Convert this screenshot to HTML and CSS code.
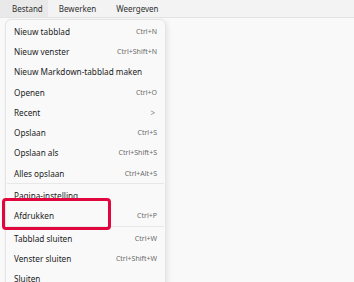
FILE: index.html
```html
<!DOCTYPE html>
<html>
<head>
<meta charset="utf-8">
<link rel="stylesheet" href="styles.css">
</head>
<body>
<div class="menubar">
  <div class="tab active">Bestand</div>
  <div class="tab">Bewerken</div>
  <div class="tab">Weergeven</div>
</div>
<div class="content">
  <div class="menu">
    <div class="item"><span>Nieuw tabblad</span><span class="sc">Ctrl+N</span></div>
    <div class="item"><span>Nieuw venster</span><span class="sc">Ctrl+Shift+N</span></div>
    <div class="item"><span>Nieuw Markdown-tabblad maken</span></div>
    <div class="item"><span>Openen</span><span class="sc">Ctrl+O</span></div>
    <div class="item"><span>Recent</span><span class="sc chev">&gt;</span></div>
    <div class="item"><span>Opslaan</span><span class="sc">Ctrl+S</span></div>
    <div class="item"><span>Opslaan als</span><span class="sc">Ctrl+Shift+S</span></div>
    <div class="item"><span>Alles opslaan</span><span class="sc">Ctrl+Alt+S</span></div>
    <div class="sep"></div>
    <div class="item"><span>Pagina-instelling</span></div>
    <div class="item"><span>Afdrukken</span><span class="sc">Ctrl+P</span></div>
    <div class="sep"></div>
    <div class="item"><span>Tabblad sluiten</span><span class="sc">Ctrl+W</span></div>
    <div class="item"><span>Venster sluiten</span><span class="sc">Ctrl+Shift+W</span></div>
    <div class="item"><span>Sluiten</span></div>
  </div>
  <div class="highlight"></div>
</div>
</body>
</html>
```
FILE: styles.css
```css
html, body {
  margin: 0;
  padding: 0;
  width: 354px;
  height: 282px;
  overflow: hidden;
  background: #f9f9f9;
  font-family: "Noto Sans", "Open Sans", sans-serif;
  color: #1b1b1b;
}
.menubar {
  display: flex;
  height: 17px;
  background: #f3f3f3;
  border-bottom: 1px solid #e3e3e3;
  font-size: 8px;
  color: #303030;
}
.tab {
  display: flex;
  align-items: center;
  height: 17px;
  padding: 0 10px 0 11px;
}
.tab.active {
  background: #e9e9e9;
  padding: 0 5px 0 12px;
}
.tab:last-child {
  padding-left: 10px;
}
.content {
  position: relative;
  padding: 1px 0 0 5px;
}
.menu {
  width: 159px;
  height: 300px;
  background: #f9f9f9;
  border: 1px solid #e4e4e4;
  border-radius: 6px;
  box-shadow: 2px 2px 5px rgba(0,0,0,0.08);
  padding-top: 1px;
  box-sizing: content-box;
}
.item {
  height: 20.3px;
  display: flex;
  align-items: center;
  justify-content: space-between;
  padding: 0 8px 0 8px;
  font-size: 8.2px;
  white-space: nowrap;
}
.sc {
  font-size: 7px;
  color: #6a6a6a;
}
.chev {
  font-size: 8px;
  color: #888;
  padding-right: 2px;
}
.sep {
  height: 2px;
  box-sizing: border-box;
  border-top: 1px solid #e8e8e8;
  margin: 0 1px;
}
.highlight {
  position: absolute;
  left: 2px;
  top: 180px;
  width: 109px;
  height: 32px;
  box-sizing: border-box;
  border: 3px solid #e1063e;
  border-radius: 4px;
}
```
